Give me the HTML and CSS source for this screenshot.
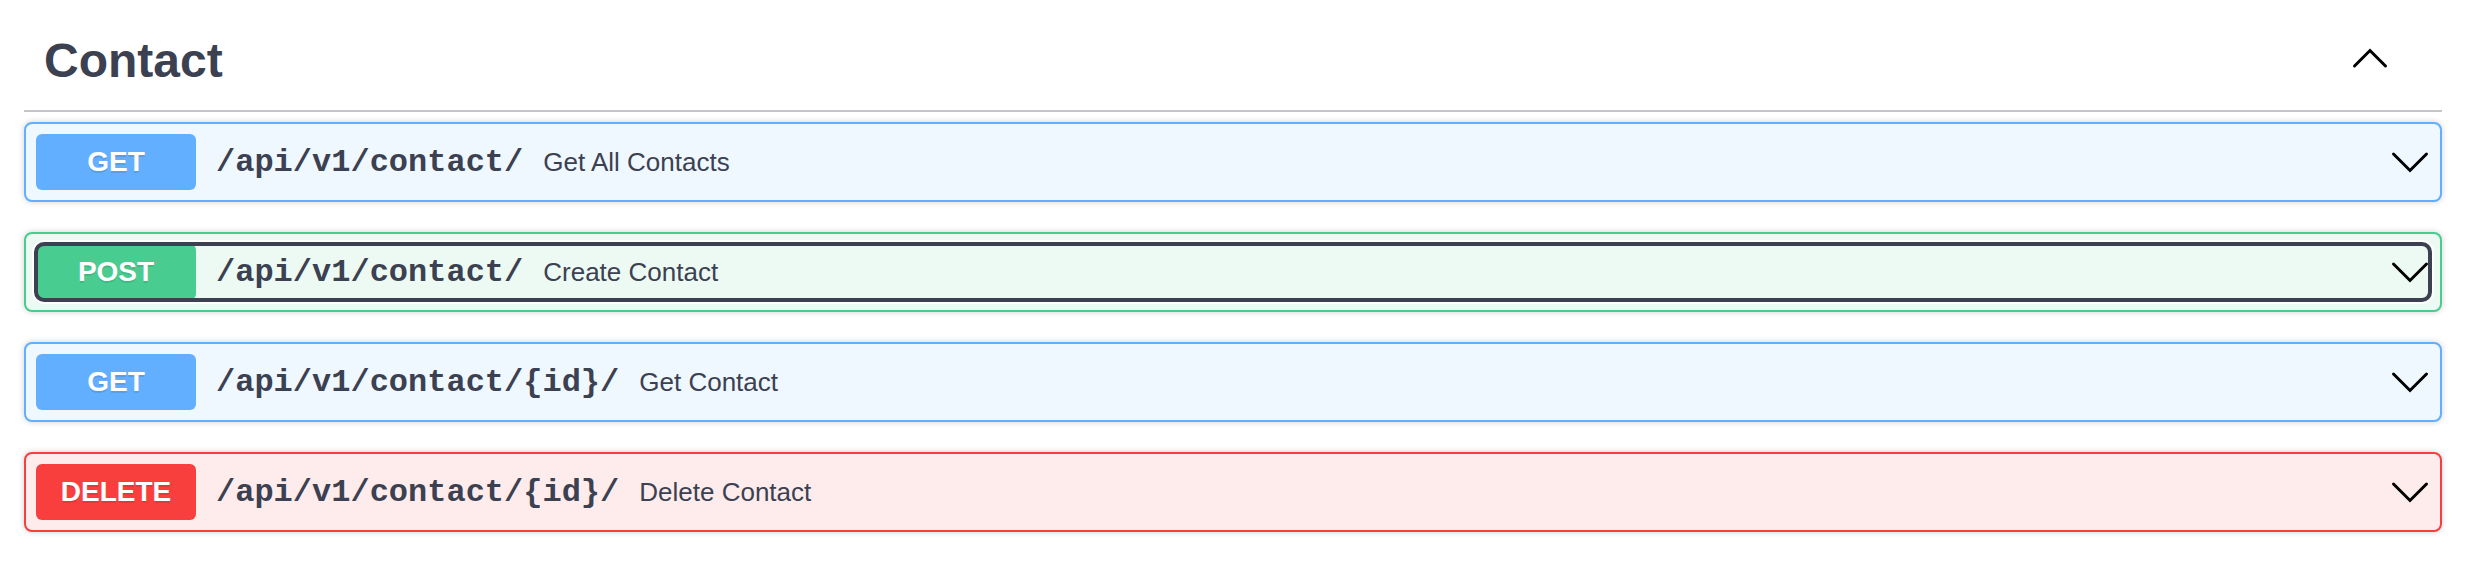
FILE: index.html
```html
<!DOCTYPE html>
<html lang="en">
<head>
<meta charset="utf-8">
<title>Contact</title>
<link rel="stylesheet" href="styles.css">
</head>
<body>
<div class="section">
  <div class="tag">
    <span class="tag-name">Contact</span>
    <svg class="tag-arrow" width="40" height="40" viewBox="0 0 40 40"><polyline points="4.5,25 20,9.5 35.5,25" /></svg>
  </div>

  <div class="opblock get">
    <div class="summary">
      <span class="method">GET</span>
      <span class="path">/api/v1/contact/</span>
      <span class="desc">Get All Contacts</span>
      <svg class="arrow" width="40" height="40" viewBox="0 0 40 40"><polyline points="3.5,12 20,28.5 36.5,12" /></svg>
    </div>
  </div>

  <div class="opblock post">
    <div class="summary focused">
      <span class="method">POST</span>
      <span class="path">/api/v1/contact/</span>
      <span class="desc">Create Contact</span>
      <svg class="arrow" width="40" height="40" viewBox="0 0 40 40"><polyline points="3.5,12 20,28.5 36.5,12" /></svg>
    </div>
  </div>

  <div class="opblock get">
    <div class="summary">
      <span class="method">GET</span>
      <span class="path">/api/v1/contact/{id}/</span>
      <span class="desc">Get Contact</span>
      <svg class="arrow" width="40" height="40" viewBox="0 0 40 40"><polyline points="3.5,12 20,28.5 36.5,12" /></svg>
    </div>
  </div>

  <div class="opblock delete">
    <div class="summary">
      <span class="method">DELETE</span>
      <span class="path">/api/v1/contact/{id}/</span>
      <span class="desc">Delete Contact</span>
      <svg class="arrow" width="40" height="40" viewBox="0 0 40 40"><polyline points="3.5,12 20,28.5 36.5,12" /></svg>
    </div>
  </div>
</div>
</body>
</html>
```
FILE: styles.css
```css
html, body {
  margin: 0;
  padding: 0;
  background: #ffffff;
}

.section {
  margin-left: 24px;
  width: 2418px;
  display: flex;
  flex-direction: column;
  font-family: "Liberation Sans", Arial, sans-serif;
  color: #3b4151;
}

.tag {
  display: flex;
  align-items: center;
  padding: 33px 52px 21px 20px;
  border-bottom: 2px solid rgba(59, 65, 81, 0.3);
  margin-bottom: 10px;
}

.tag-name {
  flex: 1;
  font-size: 48px;
  line-height: 56px;
  font-weight: 700;
  color: #3b4151;
}

.tag-arrow polyline,
.arrow polyline {
  fill: none;
  stroke: #000000;
  stroke-width: 3;
  stroke-linecap: round;
  stroke-linejoin: miter;
}

.opblock {
  border: 2px solid #000;
  border-radius: 8px;
  box-shadow: 0 0 6px rgba(0, 0, 0, 0.19);
  margin-bottom: 30px;
  padding: 10px;
}

.opblock.get {
  background: #eff7ff;
  border-color: #61affe;
}
.opblock.post {
  background: #edfaf4;
  border-color: #49cc90;
}
.opblock.delete {
  background: #feecec;
  border-color: #f93e3e;
}

.summary {
  display: flex;
  align-items: center;
  border-radius: 8px;
}

.summary.focused {
  outline: 4px solid #3b4151;
  outline-offset: -2px;
  box-shadow: 0 0 0 4px rgba(255, 255, 255, 0.85);
}

.method {
  min-width: 160px;
  padding: 12px 0;
  border-radius: 6px;
  font-size: 28px;
  line-height: 32px;
  font-weight: 700;
  color: #ffffff;
  text-align: center;
  text-shadow: 0 2px 0 rgba(0, 0, 0, 0.1);
  margin-right: 20px;
}

.get .method { background: #61affe; }
.post .method { background: #49cc90; }
.delete .method { background: #f93e3e; }

.path {
  font-family: "Liberation Mono", "Courier New", monospace;
  font-size: 32px;
  font-weight: 700;
  color: #3b4151;
  margin-right: 20px;
}

.desc {
  flex: 1;
  font-size: 26px;
  color: #3b4151;
}

.arrow {
  display: block;
  flex: none;
}
```
